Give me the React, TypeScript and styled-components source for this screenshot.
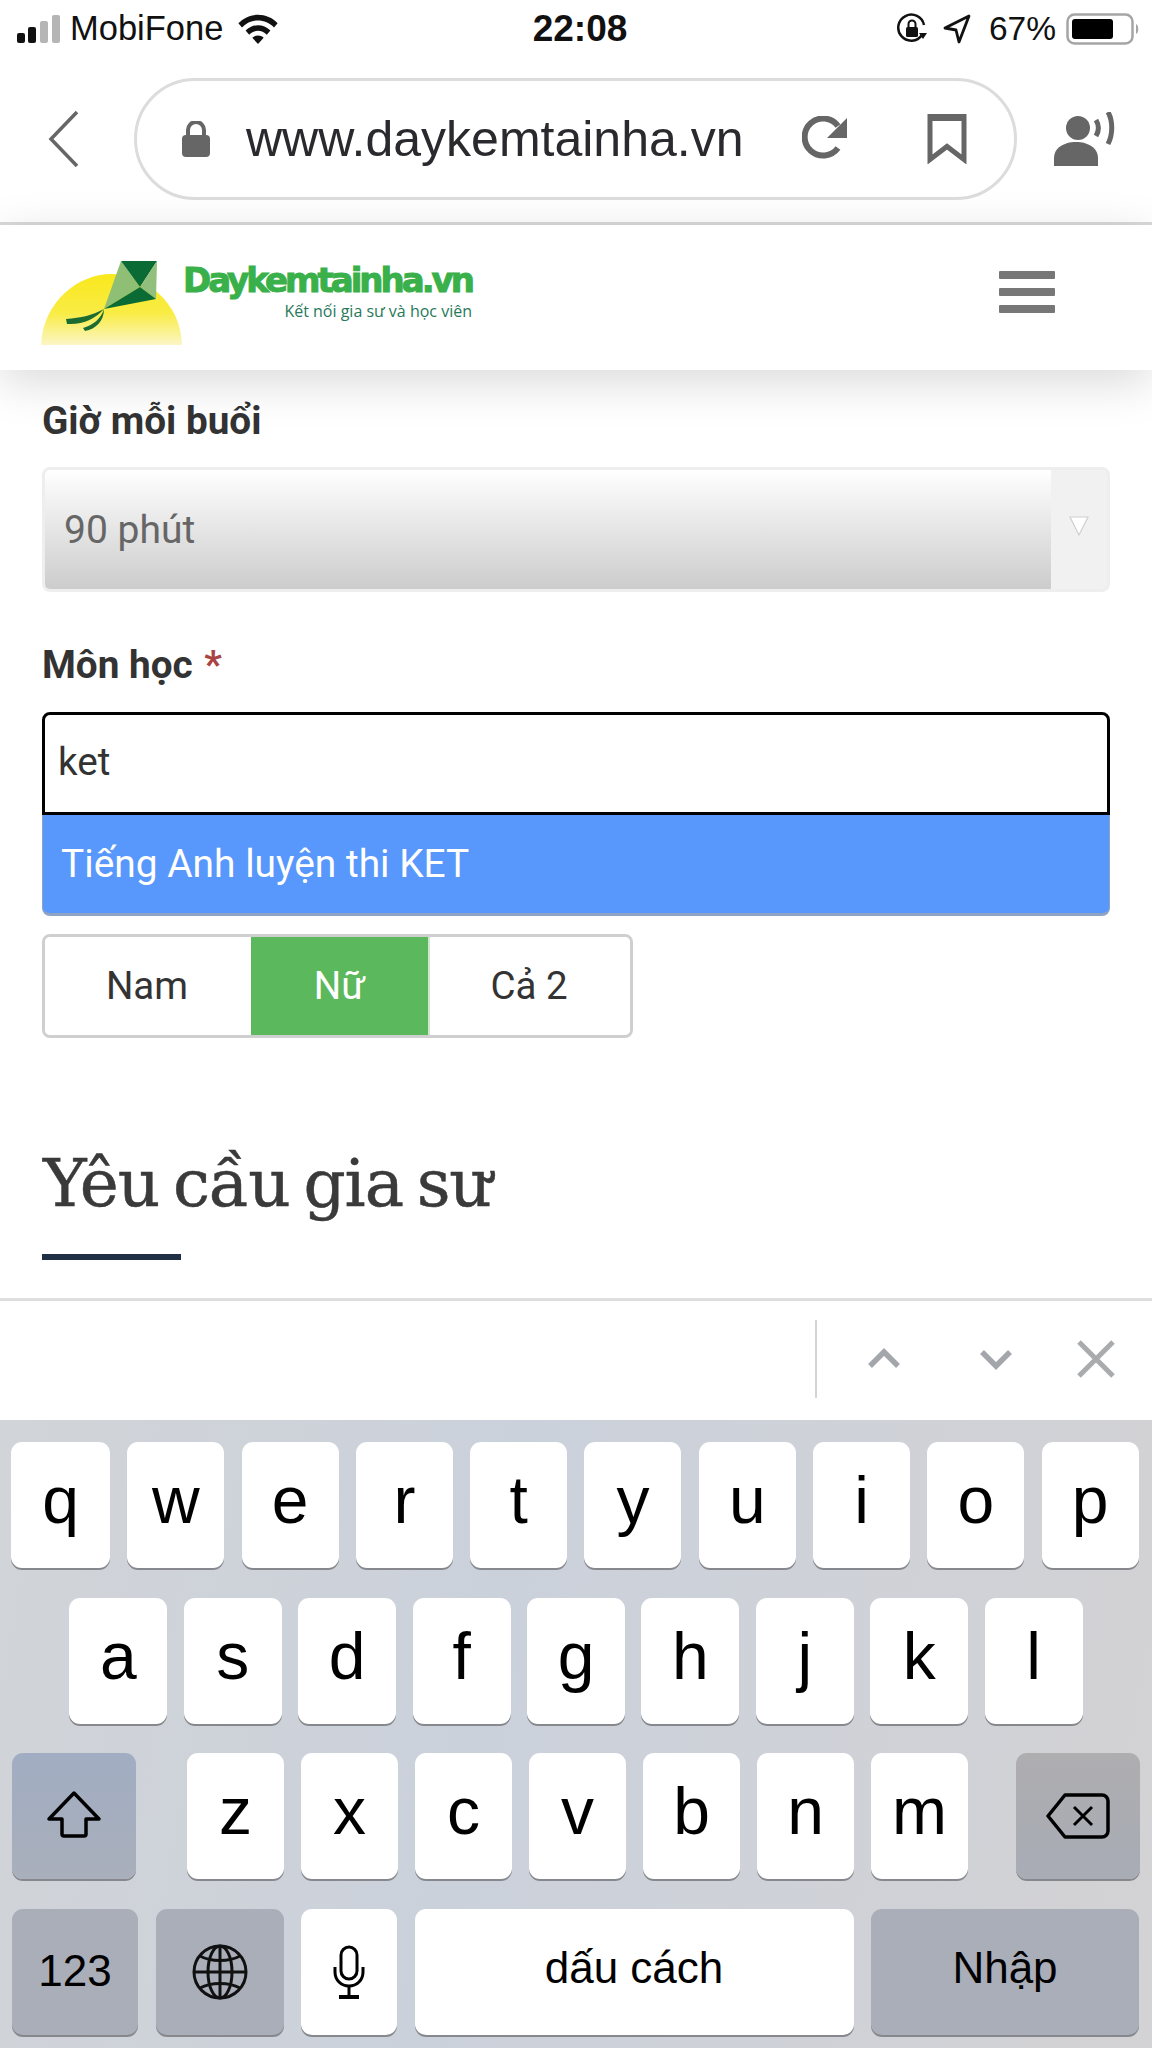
import React from "react";
import styled, { createGlobalStyle } from "styled-components";

const GlobalStyle = createGlobalStyle`
  html, body {
    margin: 0;
    padding: 0;
    background: #ffffff;
  }
  * {
    box-sizing: border-box;
  }
`;

const Phone = styled.div`
  width: 1152px;
  height: 2048px;
  overflow: hidden;
  display: flex;
  flex-direction: column;
  font-family: "Liberation Sans", Arial, sans-serif;
  background: #ffffff;
`;

const StatusBar = styled.div`
  height: 57px;
  padding: 0 12px 0 16px;
  display: grid;
  grid-template-columns: 1fr auto 1fr;
  align-items: center;
  color: #111111;
`;

const StatusGroup = styled.div<{ $end?: boolean }>`
  display: flex;
  align-items: center;
  justify-content: ${(p) => (p.$end ? "flex-end" : "flex-start")};
  gap: ${(p) => (p.$end ? "15px" : "8px")};
  font-size: 33.5px;
`;

const Carrier = styled.span`
  font-size: 34.5px;
  margin-right: 6px;
`;

const Clock = styled.span`
  font-size: 37px;
  font-weight: 700;
  margin-left: 4px;
`;

const BatteryLevel = styled.span`
  margin: 0 -5px 0 3px;
`;

const BrowserBar = styled.div`
  height: 168px;
  padding: 22px 0 24px 48px;
  display: flex;
  align-items: center;
  border-bottom: 3px solid #d9d9d9;
`;

const AddressPill = styled.div`
  width: 883px;
  height: 122px;
  margin-left: 54px;
  padding: 0 47px 0 44px;
  display: flex;
  align-items: center;
  border: 3px solid #dcdcdc;
  border-radius: 61px;
`;

const Url = styled.span`
  font-size: 50px;
  color: #2a2a2e;
  margin-left: 35px;
  flex: 1;
  white-space: nowrap;
`;

const PillIcons = styled.div`
  display: flex;
  align-items: center;
  gap: 79px;
`;

const ListenWrap = styled.div`
  margin-left: 37px;
  display: flex;
`;

const SiteHeader = styled.header`
  position: relative;
  z-index: 2;
  height: 145px;
  padding: 0 96px 0 41px;
  display: flex;
  align-items: center;
  justify-content: space-between;
  background: #ffffff;
  box-shadow: 0 12px 44px rgba(0, 0, 0, 0.15);
`;

const Logo = styled.div`
  display: flex;
  align-items: flex-start;
  margin-top: 10px;
`;

const LogoText = styled.div`
  margin-top: 2px;
  display: flex;
  flex-direction: column;
  align-items: flex-end;
`;

const LogoName = styled.span`
  font-family: "DejaVu Sans", sans-serif;
  font-weight: 700;
  font-size: 34px;
  line-height: 38px;
  letter-spacing: -3px;
  color: #39b04a;
  -webkit-text-stroke: 1px #39b04a;
`;

const LogoTagline = styled.span`
  font-family: "Open Sans", sans-serif;
  font-size: 16px;
  line-height: 24px;
  color: #27795a;
`;

const HamburgerButton = styled.div`
  width: 56px;
  margin-bottom: 12px;
  margin-right: 1px;
  display: flex;
  flex-direction: column;
  gap: 9px;
`;

const HamburgerBar = styled.span`
  height: 8px;
  background: #777777;
  border-radius: 1px;
`;

const Content = styled.main`
  flex: 1;
  padding: 30px 42px 0 42px;
  font-family: Roboto, sans-serif;
  color: #333333;
`;

const FieldLabel = styled.div`
  font-size: 38.7px;
  font-weight: 700;
  line-height: 42px;
`;

const Required = styled.span`
  color: #a94442;
  margin-left: 2px;
`;

const SelectBox = styled.div`
  width: 1068px;
  height: 125px;
  margin: 25px 0 52px;
  display: flex;
  border: 3px solid #eeeeee;
  border-radius: 8px;
  background: #f1f1f1;
  overflow: hidden;
`;

const SelectValue = styled.div`
  flex: 1;
  display: flex;
  align-items: center;
  padding-left: 19px;
  font-size: 39px;
  color: #666666;
  background: linear-gradient(to bottom, #ffffff 0%, #f2f2f2 25%, #cccccc 100%);
`;

const SelectArrow = styled.div`
  width: 56px;
  display: flex;
  justify-content: center;
  align-items: center;
  padding-bottom: 8px;
`;

const Combo = styled.div`
  width: 1068px;
  margin-top: 26px;
`;

const ComboInput = styled.div`
  height: 103px;
  padding: 0 0 4px 13px;
  display: flex;
  align-items: center;
  font-size: 38.7px;
  border: 3px solid #000000;
  border-radius: 8px 8px 0 0;
  background: #ffffff;
`;

const ComboOption = styled.div`
  height: 101px;
  padding: 0 0 2px 18px;
  display: flex;
  align-items: center;
  font-size: 38.9px;
  color: #ffffff;
  background: #5897fb;
  border: solid #8fa3c4;
  border-width: 0 1px 3px;
  border-radius: 0 0 8px 8px;
`;

const GenderGroup = styled.div`
  width: 591px;
  height: 104px;
  margin-top: 18px;
  display: flex;
  border: 3px solid #cfcfcf;
  border-radius: 8px;
  overflow: hidden;
`;

const GenderOption = styled.div<{ $active?: boolean; $width: number }>`
  width: ${(p) => p.$width}px;
  padding-bottom: 2px;
  display: flex;
  align-items: center;
  justify-content: center;
  font-size: 38.5px;
  color: ${(p) => (p.$active ? "#ffffff" : "#333333")};
  background: ${(p) => (p.$active ? "#5cb85c" : "#ffffff")};
  border-right: 2px solid ${(p) => (p.$active ? "#cfe6cf" : "transparent")};
`;

const SectionTitle = styled.h2`
  margin: 108px 0 0 1px;
  font-family: "DejaVu Serif", serif;
  font-weight: 400;
  font-size: 66px;
  line-height: 76px;
  letter-spacing: -1.1px;
  word-spacing: -6px;
  color: #3a3a3a;
  -webkit-text-stroke: 0.5px #3a3a3a;
`;

const TitleRule = styled.div`
  width: 139px;
  height: 6px;
  margin-top: 32px;
  background: #1f2f46;
`;

const FormToolbar = styled.div`
  height: 122px;
  display: flex;
  align-items: center;
  justify-content: flex-end;
  padding: 0 36px 4px 0;
  border-top: 3px solid #dedede;
`;

const ToolbarDivider = styled.span`
  width: 2px;
  height: 78px;
  margin-right: 50px;
  background: #d4d4d4;
`;

const ToolbarIcons = styled.div`
  display: flex;
  align-items: center;
`;

const ChevronSlot = styled.span<{ $width: number }>`
  display: flex;
  width: ${(p) => p.$width}px;
`;

const Keyboard = styled.div`
  height: 628px;
  padding: 22px 12px 0;
  display: flex;
  flex-direction: column;
  gap: 29.6px;
  color: #000000;
  background: linear-gradient(100deg, #d1d4d8 0%, #cbd1db 42%, #d3d2d4 100%);
`;

const KeyRow = styled.div<{ $gap?: number; $center?: boolean }>`
  height: 126px;
  display: flex;
  gap: ${(p) => p.$gap ?? 16.4}px;
  justify-content: ${(p) => (p.$center ? "center" : "flex-start")};
`;

const TopRow = styled(KeyRow)`
  margin-left: -1px;
`;

const Key = styled.div<{
  $tone?: "light" | "dark" | "blue" | "warm";
  $width?: number;
  $small?: boolean;
  $lift?: number;
}>`
  flex: none;
  width: ${(p) => p.$width ?? 98}px;
  height: 126px;
  display: flex;
  align-items: center;
  justify-content: center;
  padding-bottom: ${(p) => p.$lift ?? 10}px;
  font-size: ${(p) => (p.$small ? "44px" : "66px")};
  line-height: 1;
  border-radius: 11px;
  box-shadow: 0 2px 0 #86888d;
  background: ${(p) =>
    p.$tone === "dark"
      ? "#a9aeb9"
      : p.$tone === "blue"
        ? "linear-gradient(#a1adc2, #a9afbb)"
        : p.$tone === "warm"
          ? "linear-gradient(#aeadb0, #a8acb5)"
          : "#ffffff"};
`;

const LetterGroup = styled.div`
  display: flex;
  gap: 17px;
  margin: 0 48px 0 51px;
`;

const SignalIcon = () => (
  <svg width="46" height="30" viewBox="0 0 46 30">
    <rect x="1" y="19" width="8" height="10" rx="2" fill="#111" />
    <rect x="12" y="13" width="8" height="16" rx="2" fill="#111" />
    <rect x="24" y="7" width="8" height="22" rx="2" fill="#b5b5b5" />
    <rect x="36" y="1" width="8" height="28" rx="2" fill="#b5b5b5" />
  </svg>
);

const WifiIcon = () => (
  <svg width="42" height="31" viewBox="0 0 40 30">
    <path d="M1 10C11-1 29-1 39 10l-3.500 4C27 5 13 5 4.500 14Z" fill="#111" />
    <path d="M8 17c7-7 17-7 24 0l-3.500 4c-5-5-12-5-17 0Z" fill="#111" />
    <path d="M14.500 24c3-3 8-3 11 0L20 30Z" fill="#111" />
  </svg>
);

const RotationLockIcon = () => (
  <svg width="32" height="32" viewBox="0 0 32 32">
    <path d="M26 22A13 13 0 1 1 28 12" fill="none" stroke="#111" strokeWidth="2.500" />
    <path d="M23 20h8l-4 6Z" fill="#111" />
    <rect x="10" y="14" width="12" height="10" rx="1.500" fill="#111" />
    <path d="M12.500 14v-3a3.500 3.500 0 0 1 7 0v3" fill="none" stroke="#111" strokeWidth="2" />
  </svg>
);

const LocationIcon = () => (
  <svg width="28" height="30" viewBox="0 0 28 30">
    <path d="M26 2 2 14l11 2 3 12Z" fill="none" stroke="#111" strokeWidth="2.800" strokeLinejoin="round" />
  </svg>
);

const BatteryIcon = () => (
  <svg width="74" height="32" viewBox="0 0 74 32">
    <rect x="1.500" y="1.500" width="65" height="29" rx="7" fill="none" stroke="#a5a5a5" strokeWidth="2.500" />
    <rect x="6" y="6" width="41" height="20" rx="3" fill="#000" />
    <path d="M70 11c3 1 3 9 0 10Z" fill="#a5a5a5" />
  </svg>
);

const BackIcon = () => (
  <svg width="32" height="58" viewBox="0 0 32 58">
    <path d="M29 2 3 29l26 27" fill="none" stroke="#666" strokeWidth="3.500" />
  </svg>
);

const LockIcon = () => (
  <svg width="30" height="36" viewBox="0 0 30 36">
    <rect x="1" y="14" width="28" height="22" rx="4" fill="#666" />
    <path d="M7 15V9a8 8 0 0 1 16 0v6" fill="none" stroke="#666" strokeWidth="4" />
  </svg>
);

const ReloadIcon = () => (
  <svg width="46" height="46" viewBox="0 0 46 46">
    <path d="M36 32A18.500 18.500 0 1 1 36 10" fill="none" stroke="#666" strokeWidth="6" />
    <path d="M45 2v20H25Z" fill="#666" />
  </svg>
);

const BookmarkIcon = () => (
  <svg width="40" height="50" viewBox="0 0 40 50">
    <path d="M3 2.500h34v43l-17-13-17 13Z" fill="none" stroke="#666" strokeWidth="5" />
    <rect x="2" y="1" width="36" height="6" fill="#666" />
  </svg>
);

const ListenIcon = () => (
  <svg width="62" height="54" viewBox="0 0 62 54">
    <circle cx="24" cy="16" r="12" fill="#666" />
    <path d="M0 54V46C0 36 10 30 22 30s22 6 22 16v8Z" fill="#666" />
    <path d="M42 8c3 5 3 11 0 16" fill="none" stroke="#666" strokeWidth="5" />
    <path d="M54 0c5 9 5 22 0 32" fill="none" stroke="#666" strokeWidth="5" />
  </svg>
);

const KiteLogo = () => (
  <svg width="142" height="88" viewBox="0 0 142 88">
    <defs>
      <linearGradient id="sun" x1="0" y1="0" x2="0" y2="1">
        <stop offset="0" stopColor="#f9e81c" />
        <stop offset="0.55" stopColor="#f9ec45" />
        <stop offset="1" stopColor="#fbf6c6" />
      </linearGradient>
    </defs>
    <path d="M0 86C2 42 38 15 70 15s70 27 71 71Z" fill="url(#sun)" />
    <path d="M80 2 63 50 99 28Z" fill="#8fbf74" />
    <path d="M80 2h36L99 28Z" fill="#0b6b34" />
    <path d="M116 2l-1 38-16-12Z" fill="#92bf7c" />
    <path d="M99 28l16 12-52 10Z" fill="#0b6b34" />
    <path d="M63 50C52 56 40 59 25 60l1 5C42 66 54 60 63 50Z" fill="#1c6b30" />
    <path d="M63 50C60 60 52 66 42 69l2 3C55 70 63 62 63 50Z" fill="#1c6b30" />
  </svg>
);

const SelectCaret = () => (
  <svg width="22" height="22" viewBox="0 0 22 22">
    <path d="M2 2h18l-9 18Z" fill="#ffffff" stroke="#cfcfcf" strokeWidth="1.200" />
  </svg>
);

const ToolbarChevron = ({ down }: { down?: boolean }) => (
  <svg width="34" height="22" viewBox="0 0 34 22">
    <path d={down ? "M3 4l14 14L31 4" : "M3 18 17 4l14 14"} fill="none" stroke="#a3a6aa" strokeWidth="5.500" />
  </svg>
);

const ToolbarClose = () => (
  <svg width="40" height="40" viewBox="0 0 40 40">
    <path d="M3 3l34 34M37 3 3 37" fill="none" stroke="#a9abad" strokeWidth="5" />
  </svg>
);

const ShiftIcon = () => (
  <svg width="56" height="50" viewBox="0 0 56 50">
    <path
      d="M28 3 3 29h13v15a2 2 0 0 0 2 2h20a2 2 0 0 0 2-2V29h13Z"
      fill="none"
      stroke="#000"
      strokeWidth="3.500"
      strokeLinejoin="round"
    />
  </svg>
);

const BackspaceIcon = () => (
  <svg width="64" height="48" viewBox="0 0 64 48">
    <path
      d="M19 3h37a6 6 0 0 1 6 6v30a6 6 0 0 1-6 6H19L2 24Z"
      fill="none"
      stroke="#000"
      strokeWidth="3.500"
      strokeLinejoin="round"
    />
    <path d="M28 15l18 18M46 15 28 33" fill="none" stroke="#000" strokeWidth="3" />
  </svg>
);

const GlobeIcon = () => (
  <svg width="56" height="56" viewBox="0 0 56 56" fill="none" stroke="#111" strokeWidth="3">
    <circle cx="28" cy="28" r="26" />
    <ellipse cx="28" cy="28" rx="12" ry="26" />
    <path d="M2 28h52M28 2v52" />
    <path d="M8 12c11 6 29 6 40 0M8 44c11-6 29-6 40 0" />
  </svg>
);

const MicIcon = () => (
  <svg width="34" height="54" viewBox="0 0 34 54" fill="none" stroke="#000" strokeWidth="3">
    <rect x="9" y="2" width="16" height="32" rx="8" />
    <path d="M3 22v5c0 8 6 14 14 14s14-6 14-14v-5" />
    <path d="M17 41v10" />
    <path d="M7 52h20" strokeWidth="4" />
  </svg>
);

const row1 = ["q", "w", "e", "r", "t", "y", "u", "i", "o", "p"];
const row2 = ["a", "s", "d", "f", "g", "h", "j", "k", "l"];
const row3 = ["z", "x", "c", "v", "b", "n", "m"];

const App: React.FC = () => {
  return (
    <Phone>
      <GlobalStyle />
      <StatusBar>
        <StatusGroup>
          <SignalIcon />
          <Carrier>MobiFone</Carrier>
          <WifiIcon />
        </StatusGroup>
        <Clock>22:08</Clock>
        <StatusGroup $end>
          <RotationLockIcon />
          <LocationIcon />
          <BatteryLevel>67%</BatteryLevel>
          <BatteryIcon />
        </StatusGroup>
      </StatusBar>

      <BrowserBar>
        <BackIcon />
        <AddressPill>
          <LockIcon />
          <Url>www.daykemtainha.vn</Url>
          <PillIcons>
            <ReloadIcon />
            <BookmarkIcon />
          </PillIcons>
        </AddressPill>
        <ListenWrap>
          <ListenIcon />
        </ListenWrap>
      </BrowserBar>

      <SiteHeader>
        <Logo>
          <KiteLogo />
          <LogoText>
            <LogoName>Daykemtainha.vn</LogoName>
            <LogoTagline>Kết nối gia sư và học viên</LogoTagline>
          </LogoText>
        </Logo>
        <HamburgerButton>
          <HamburgerBar />
          <HamburgerBar />
          <HamburgerBar />
        </HamburgerButton>
      </SiteHeader>

      <Content>
        <FieldLabel>Giờ mỗi buổi</FieldLabel>
        <SelectBox>
          <SelectValue>90 phút</SelectValue>
          <SelectArrow>
            <SelectCaret />
          </SelectArrow>
        </SelectBox>

        <FieldLabel>
          Môn học <Required>*</Required>
        </FieldLabel>
        <Combo>
          <ComboInput>ket</ComboInput>
          <ComboOption>Tiếng Anh luyện thi KET</ComboOption>
        </Combo>

        <GenderGroup>
          <GenderOption $width={206}>Nam</GenderOption>
          <GenderOption $width={179} $active>
            Nữ
          </GenderOption>
          <GenderOption $width={200}>Cả 2</GenderOption>
        </GenderGroup>

        <SectionTitle>Yêu cầu gia sư</SectionTitle>
        <TitleRule />
      </Content>

      <FormToolbar>
        <ToolbarDivider />
        <ToolbarIcons>
          <ChevronSlot $width={112}>
            <ToolbarChevron />
          </ChevronSlot>
          <ChevronSlot $width={97}>
            <ToolbarChevron down />
          </ChevronSlot>
          <ToolbarClose />
        </ToolbarIcons>
      </FormToolbar>

      <Keyboard>
        <TopRow $gap={17.3}>
          {row1.map((k, i) => (
            <Key key={k} $width={i === 0 ? 99 : 97}>
              {k}
            </Key>
          ))}
        </TopRow>
        <KeyRow $center>
          {row2.map((k) => (
            <Key key={k}>{k}</Key>
          ))}
        </KeyRow>
        <KeyRow $gap={0}>
          <Key $tone="blue" $width={124} $lift={2}>
            <ShiftIcon />
          </Key>
          <LetterGroup>
            {row3.map((k) => (
              <Key key={k} $width={97}>
                {k}
              </Key>
            ))}
          </LetterGroup>
          <Key $tone="warm" $width={124} $lift={0}>
            <BackspaceIcon />
          </Key>
        </KeyRow>
        <KeyRow $gap={17.5}>
          <Key $tone="dark" $width={126} $small $lift={2}>
            123
          </Key>
          <Key $tone="dark" $width={128} $small $lift={0}>
            <GlobeIcon />
          </Key>
          <Key $width={96} $small $lift={0}>
            <MicIcon />
          </Key>
          <Key $width={439} $small $lift={8}>
            dấu cách
          </Key>
          <Key $tone="dark" $width={268} $small $lift={8}>
            Nhập
          </Key>
        </KeyRow>
      </Keyboard>
    </Phone>
  );
};

export default App;
